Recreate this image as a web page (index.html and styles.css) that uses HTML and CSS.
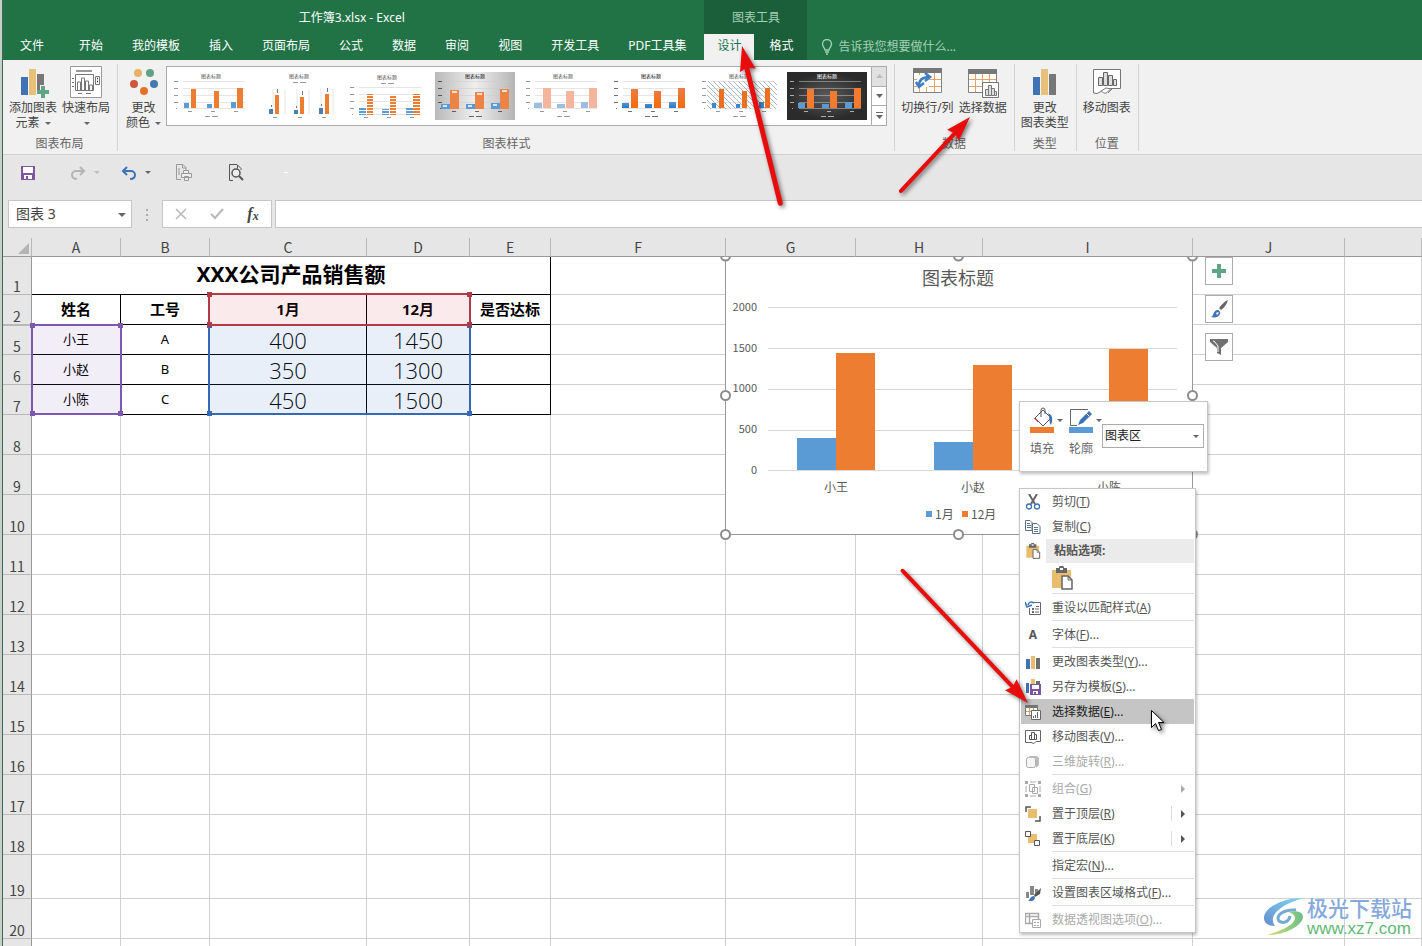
FILE: index.html
```html
<!DOCTYPE html>
<html lang="zh-CN">
<head>
  <meta charset="UTF-8">
  <meta name="viewport" content="width=device-width, initial-scale=1.0">
  <title>工作簿3.xlsx - Excel</title>
  <link rel="stylesheet" href="styles.css">
</head>
<body>
  <svg class="defs" width="0" height="0" aria-hidden="true">
    <defs>
      <linearGradient id="lightBg"><stop offset="0" stop-color="#b9b9b9"/><stop offset=".5" stop-color="#efefef"/><stop offset="1" stop-color="#b5b5b5"/></linearGradient>
      <radialGradient id="darkBg"><stop offset="0" stop-color="#5a5a5a"/><stop offset="1" stop-color="#2b2b2b"/></radialGradient>
      <linearGradient id="blueBar" x2="0" y2="1"><stop offset="0" stop-color="#5b9bd5"/><stop offset="1" stop-color="#2f75c0"/></linearGradient>
      <linearGradient id="orangeBar" x2="0" y2="1"><stop offset="0" stop-color="#ed7d45"/><stop offset="1" stop-color="#f26a08"/></linearGradient>
      <pattern id="blueStripe" width="4" height="3" patternUnits="userSpaceOnUse"><path d="M0 0h4v2H0z" fill="#5b9bd5"/></pattern>
      <pattern id="orangeStripe" width="4" height="3" patternUnits="userSpaceOnUse"><path d="M0 0h4v2H0z" fill="#ed7d31"/></pattern>
      <pattern id="hatch" width="5" height="5" patternUnits="userSpaceOnUse"><path d="M0 0l5 5" stroke="#8fa6b5" stroke-width=".8"/></pattern>
      <symbol id="plot" viewBox="0 0 80 48">
        <path class="lines" d="M12 9.500h62M12 16.500h62M12 23.500h62M12 30.500h62M12 36.500h62"/>
        <path class="ticks" d="M3 9.500h4M3 16.500h4M3 23.500h4M3 30.500h4M5 36.500h1"/>
        <text class="thumb-title" x="40" y="6">图表标题</text>
        <path class="names" d="M17 39.500h4M40 39.500h4M63 39.500h4M34 44.500h5M41 44.500h6"/>
      </symbol>
      <symbol id="plotTop" viewBox="0 0 80 48">
        <path class="lines" d="M14 17v26M26 17v26M38 17v26M50 17v26M62 17v26M74 17v26"/>
        <text class="thumb-title" x="40" y="6">图表标题</text>
        <path class="names" d="M34 10.500h5M41 10.500h6M14 45.500h4M39 45.500h4M63 45.500h4"/>
      </symbol>
      <symbol id="plotStripe" viewBox="0 0 80 48">
        <path class="lines" d="M12 15.500h62M12 22.500h62M12 29.500h62M12 36.500h62M12 42.500h62"/>
        <path class="ticks" d="M3 15.500h4M3 22.500h4M3 29.500h4M3 36.500h4M5 42.500h1"/>
        <text class="thumb-title" x="40" y="7">图表标题</text>
        <path class="names" d="M34 11.500h5M41 11.500h6M17 45.500h4M40 45.500h4M63 45.500h4"/>
      </symbol>
      <symbol id="bars" viewBox="0 0 16 16"><path fill="#3f73b5" d="M1 5h4v10H1z"/><path fill="#e9bd6f" d="M6 2h4v13H6z"/><path fill="#6d6d6d" d="M11 4h4v11h-4z"/></symbol>
      <symbol id="clip" viewBox="0 0 22 24">
        <path fill="#e9bd6f" d="M1 4h19v18H1z"/><path fill="#666" d="M5 2h3a2.500 2.500 0 0 1 5 0h3v5H5z"/><path fill="#fff" d="M9 2h3v2H9z"/>
        <path fill="#fff" stroke="#666" stroke-width="1.500" d="M11 10h6l4 4v9H11z"/><path fill="none" stroke="#666" d="M17 10v4h4"/>
      </symbol>
    </defs>
  </svg>

  <div class="app">
    <header class="header">
      <div class="header-main">
        <div class="title">工作簿3.xlsx - Excel</div>
        <nav class="tabs">
          <button class="tab file">文件</button>
          <button class="tab">开始</button>
          <button class="tab">我的模板</button>
          <button class="tab">插入</button>
          <button class="tab">页面布局</button>
          <button class="tab">公式</button>
          <button class="tab">数据</button>
          <button class="tab">审阅</button>
          <button class="tab">视图</button>
          <button class="tab">开发工具</button>
          <button class="tab">PDF工具集</button>
        </nav>
      </div>
      <div class="chart-tools">
        <div class="chart-tools-title">图表工具</div>
        <nav class="tabs">
          <button class="tab active">设计</button>
          <button class="tab">格式</button>
        </nav>
      </div>
      <button class="tell-me">
        <svg width="12" height="16" viewBox="0 0 12 16"><path d="M4 11C4 9 1.500 8 1.500 5a4.500 4.500 0 0 1 9 0C10.500 8 8 9 8 11zM4 13h4M5 15h2" fill="none" stroke="#a5d0b5" stroke-width="1.300"/></svg>
        告诉我您想要做什么...
      </button>
    </header>

    <div class="ribbon">
      <section class="group">
        <div class="tools">
          <button class="tool">
            <svg width="32" height="32"><path fill="#3f73b5" d="M4 11h7v18H4z"/><path fill="#e9c078" d="M12 3h7v26h-7z"/><path fill="#777" d="M20 8h7v11h-4v5h-3z"/><path fill="#5fa588" d="M24 20h4v4h4v4h-4v4h-4v-4h-4v-4h4z"/></svg>
            <span>添加图表<br>元素 <i class="caret"></i></span>
          </button>
          <button class="tool">
            <svg width="32" height="32"><path fill="#fff" stroke="#999" d="M.5.5h31v31H.5z"/><path fill="#999" d="M6 4h16v2H6z"/><path fill="none" stroke="#777" d="M5.500 8.500h18v16h-18zM2 12.500h2M2 16.500h2M2 20.500h2M8 27.500h4M16 27.500h5M7.500 24v-8h3v8M11.500 24V12h3v12M15.500 24v-9h3v9M19.500 24v-5h3v5M25.500 10.500h4v8h-4z"/><path stroke="#333" stroke-width="1.500" d="M27 12.500h1M27 15.500h1"/></svg>
            <span>快速布局<br><i class="caret"></i></span>
          </button>
        </div>
        <h2>图表布局</h2>
      </section>
      <section class="group styles-group">
        <div class="tools">
          <button class="tool">
            <svg width="32" height="32"><circle cx="10" cy="7" r="4" fill="#e4b365"/><circle cx="22" cy="7" r="4" fill="#62a086"/><circle cx="6" cy="18" r="4" fill="#cc553b"/><circle cx="26" cy="18" r="4" fill="#4677ae"/><circle cx="16" cy="25" r="4" fill="#e37228"/></svg>
            <span>更改<br>颜色 <i class="caret"></i></span>
          </button>
          <div class="gallery">
            <div class="thumbs">
              <svg class="thumb"><use href="#plot"/><path fill="#5b9bd5" d="M13 31h5v5h-5zM36 32h5v4h-5zM60 30h5v6h-5z"/><path fill="#ed7d31" d="M20 17h5v19h-5zM43 19h5v17h-5zM66 16h6v20h-6z"/></svg>
              <svg class="thumb"><use href="#plotTop"/><path fill="#4a81b5" d="M10 37h4v5h-4zM35 38h4v4h-4zM60 36h4v6h-4z"/><path fill="#ed7d31" d="M16 23h4v19h-4zM41 25h4v17h-4zM66 22h4v20h-4z"/><path stroke="#777" d="M12.500 33v2M37.500 34v2M62.500 32v2M18.500 17v4M43.500 19v4M68.500 16v4"/></svg>
              <svg class="thumb"><use href="#plotStripe"/><path fill="url(#blueStripe)" d="M12 36h7v7h-7zM35 37h7v6h-7zM59 36h7v7h-7z"/><path fill="url(#orangeStripe)" d="M20 22h6v21h-6zM43 24h6v19h-6zM66 22h7v21h-7z"/></svg>
              <svg class="thumb strong"><path fill="url(#lightBg)" d="M0 0h80v48H0z"/><use href="#plot"/><path fill="#5b9bd5" d="M6 32h9v5H6zM31 32h9v5h-9zM56 31h9v6h-9z"/><path fill="#ed8345" d="M15 18h9v19h-9zM40 20h9v17h-9zM65 17h9v20h-9z"/><path stroke="#fff" stroke-width="1.500" d="M17 20h5M42 22h5M67 19h5M8 34h4M33 34h4M58 33h4"/></svg>
              <svg class="thumb"><use href="#plot"/><path fill="#9dbde3" d="M11 31h8v5h-8zM34 32h8v4h-8zM58 30h7v6h-7z"/><path fill="#f5b49c" d="M20 16h8v20h-8zM43 19h8v17h-8zM66 16h8v20h-8z"/></svg>
              <svg class="thumb strong"><use href="#plot"/><path fill="url(#blueBar)" d="M11 31h7v5h-7zM34 32h7v4h-7zM58 30h7v6h-7z"/><path fill="url(#orangeBar)" d="M20 17h7v19h-7zM43 19h7v17h-7zM67 16h7v20h-7z"/></svg>
              <svg class="thumb"><path fill="url(#hatch)" d="M8 9h70v28H8z"/><use href="#plot"/><path fill="#3f86cc" d="M13 31h4v5h-4zM37 32h4v4h-4zM60 30h5v6h-5z"/><path fill="#ed7021" d="M20 17h5v19h-5zM43 19h5v17h-5zM66 16h5v20h-5z"/></svg>
              <svg class="thumb dark"><path fill="url(#darkBg)" d="M0 0h80v48H0z"/><use href="#plot"/><path fill="#5b9bd5" d="M11 31h7v5h-7zM35 32h7v4h-7zM58 30h7v6h-7z"/><path fill="#f37b31" d="M20 17h7v19h-7zM43 19h7v17h-7zM67 16h7v20h-7z"/></svg>
            </div>
            <div class="scroller">
              <button disabled aria-label="上一行"><svg width="7" height="4"><path d="M0 4l3.500-4L7 4z" fill="#bbb"/></svg></button>
              <button aria-label="下一行"><svg width="7" height="4"><path d="M0 0h7L3.500 4z" fill="#666"/></svg></button>
              <button aria-label="其他"><svg width="7" height="7"><path d="M0 0h7v1H0zM0 3h7L3.500 7z" fill="#666"/></svg></button>
            </div>
          </div>
        </div>
        <h2>图表样式</h2>
      </section>
      <section class="group">
        <div class="tools">
          <button class="tool">
            <svg width="32" height="32"><path fill="#fff" d="M2 3h28v24H2z"/><path fill="none" stroke="#e9a06a" d="M8.500 6v21M23.500 6v21M15.500 6v21M2 13.500h28M2 20.500h28"/><path fill="none" stroke="#808080" d="M2.500 2.500h28v24h-28z"/><path fill="#777" d="M2 2h29v5H2z"/><path fill="#fff" d="M6 9h12v12H6z"/><path d="M8 20c0-6 4-9 10-9M14 7l5 4-5 4M5 16l3 5 5-4" fill="none" stroke="#3f7fc1" stroke-width="2.500"/></svg>
            <span>切换行/列</span>
          </button>
          <button class="tool">
            <svg width="32" height="32"><path fill="#fff" d="M1 3h28v23H1z"/><path fill="none" stroke="#e9a06a" d="M8.500 8v18M15.500 8v18M22.500 8v18M1 13.500h28M1 20.500h28"/><path fill="none" stroke="#808080" d="M1.500 3.500h28v23h-28z"/><path fill="#777" d="M1 3h29v5H1z"/><path fill="#fff" stroke="#777" d="M15.500 16.500h16v15h-16z"/><path fill="#ddd" stroke="#777" d="M18.500 29.500v-6h3v6zM21.500 29.500v-10h3v10zM24.500 29.500v-7h3v7zM27.500 29.500v-4h2v4z"/></svg>
            <span>选择数据</span>
          </button>
        </div>
        <h2>数据</h2>
      </section>
      <section class="group">
        <div class="tools">
          <button class="tool">
            <svg width="32" height="32"><path fill="#3f73b5" d="M4 11h7v18H4z"/><path fill="#e9c078" d="M12 3h7v26h-7z"/><path fill="#777" d="M20 8h7v21h-7z"/></svg>
            <span>更改<br>图表类型</span>
          </button>
        </div>
        <h2>类型</h2>
      </section>
      <section class="group">
        <div class="tools">
          <button class="tool">
            <svg width="32" height="32"><path fill="#fff" stroke="#777" d="M2.500 3.500h27v19H20l-4 4c-3 2-4-1-6-1l-4 2-3.500-.5z"/><path fill="none" stroke="#777" d="M10 25l5-3 6 1-4 4"/><path fill="#ddd" stroke="#666" d="M7.500 19.500v-8h4v8zM12.500 19.500v-13h4v13zM17.500 19.500v-10h4v10zM22.500 19.500v-6h3v6z"/></svg>
            <span>移动图表</span>
          </button>
        </div>
        <h2>位置</h2>
      </section>
    </div>

    <div class="quick-bar">
      <button aria-label="保存"><svg width="16" height="16"><path fill="#8055a0" d="M1 1h14v14H1z"/><path fill="#fff" d="M3 2h10v6H3zM4 10h8v4H4z"/><path fill="#8055a0" d="M6 11h2v3H6z"/></svg></button>
      <button class="split" disabled aria-label="恢复"><svg width="16" height="16"><path d="M14 6H6a4 4 0 0 0-4 4c0 3 2 4 5 4M10 2l4 4-4 4" fill="none" stroke="#b5b5b5" stroke-width="2"/></svg><i class="caret"></i></button>
      <button class="split" aria-label="撤消"><svg width="16" height="16"><path d="M2 6h8a4 4 0 0 1 4 4c0 3-2 4-5 4M6 2L2 6l4 4" fill="none" stroke="#3f73b5" stroke-width="2"/></svg><i class="caret"></i></button>
      <button class="print" aria-label="快速打印"><svg width="17" height="17"><path d="M6 15.500H1.500V.5H8l3 3V6M7.500.5V4H11M4 4v7" fill="none" stroke="#999"/><path d="M8.500 9V6.500h5V9M6.500 9.500h10v4h-10zM9.500 12.500h4v4h-4z" fill="#eee" stroke="#999"/></svg></button>
      <button class="preview" aria-label="打印预览"><svg width="16" height="17"><path d="M5 16.500H1.500V.5H9l4 4V6M9.500 1v3.500" fill="none" stroke="#555"/><circle cx="8" cy="9" r="4" fill="#eee" stroke="#555" stroke-width="1.500"/><path d="M11 12l4 4" stroke="#555" stroke-width="2"/></svg></button>
      <span class="more"></span>
    </div>

    <div class="formula-bar">
      <div class="name-box">
        <input type="text" value="图表 3" aria-label="名称框">
        <button aria-label="名称列表"><i class="caret"></i></button>
      </div>
      <span class="grip"></span>
      <div class="formula-buttons">
        <button disabled aria-label="取消"><svg width="12" height="12"><path d="M1 1l10 10M11 1L1 11" stroke="#b8b8b8" stroke-width="1.500"/></svg></button>
        <button disabled aria-label="输入"><svg width="14" height="12"><path d="M1 6l4 4 8-9" fill="none" stroke="#b8b8b8" stroke-width="2"/></svg></button>
        <button class="fx" aria-label="插入函数">f<small>x</small></button>
      </div>
      <input class="formula" type="text" aria-label="编辑栏">
    </div>

    <main class="sheet">
      <table class="grid">
        <colgroup>
          <col class="col-num"><col class="col-a"><col class="col-b"><col class="col-c"><col class="col-d"><col class="col-e"><col class="col-f"><col class="col-g"><col class="col-h"><col class="col-i"><col class="col-j"><col>
        </colgroup>
        <thead>
          <tr><th><svg class="corner" width="11" height="11"><path d="M11 0v11H0z" fill="#b4b4b4"/></svg></th><th>A</th><th>B</th><th>C</th><th>D</th><th>E</th><th>F</th><th>G</th><th>H</th><th>I</th><th>J</th><th></th></tr>
        </thead>
        <tbody>
          <tr class="row-title"><th>1</th><td class="cell" colspan="5">XXX公司产品销售额</td><td></td><td></td><td></td><td></td><td></td><td></td></tr>
          <tr class="row-data row-names"><th>2</th><td class="cell">姓名</td><td class="cell">工号</td><td class="cell">1月</td><td class="cell">12月</td><td class="cell">是否达标</td><td></td><td></td><td></td><td></td><td></td><td></td></tr>
          <tr class="row-data after-hidden"><th>5</th><td class="cell">小王</td><td class="cell">A</td><td class="cell num">400</td><td class="cell num">1450</td><td class="cell"></td><td></td><td></td><td></td><td></td><td></td><td></td></tr>
          <tr class="row-data"><th>6</th><td class="cell">小赵</td><td class="cell">B</td><td class="cell num">350</td><td class="cell num">1300</td><td class="cell"></td><td></td><td></td><td></td><td></td><td></td><td></td></tr>
          <tr class="row-data"><th>7</th><td class="cell">小陈</td><td class="cell">C</td><td class="cell num">450</td><td class="cell num">1500</td><td class="cell"></td><td></td><td></td><td></td><td></td><td></td><td></td></tr>
          <tr><th>8</th><td></td><td></td><td></td><td></td><td></td><td></td><td></td><td></td><td></td><td></td><td></td></tr>
          <tr><th>9</th><td></td><td></td><td></td><td></td><td></td><td></td><td></td><td></td><td></td><td></td><td></td></tr>
          <tr><th>10</th><td></td><td></td><td></td><td></td><td></td><td></td><td></td><td></td><td></td><td></td><td></td></tr>
          <tr><th>11</th><td></td><td></td><td></td><td></td><td></td><td></td><td></td><td></td><td></td><td></td><td></td></tr>
          <tr><th>12</th><td></td><td></td><td></td><td></td><td></td><td></td><td></td><td></td><td></td><td></td><td></td></tr>
          <tr><th>13</th><td></td><td></td><td></td><td></td><td></td><td></td><td></td><td></td><td></td><td></td><td></td></tr>
          <tr><th>14</th><td></td><td></td><td></td><td></td><td></td><td></td><td></td><td></td><td></td><td></td><td></td></tr>
          <tr><th>15</th><td></td><td></td><td></td><td></td><td></td><td></td><td></td><td></td><td></td><td></td><td></td></tr>
          <tr><th>16</th><td></td><td></td><td></td><td></td><td></td><td></td><td></td><td></td><td></td><td></td><td></td></tr>
          <tr><th>17</th><td></td><td></td><td></td><td></td><td></td><td></td><td></td><td></td><td></td><td></td><td></td></tr>
          <tr><th>18</th><td></td><td></td><td></td><td></td><td></td><td></td><td></td><td></td><td></td><td></td><td></td></tr>
          <tr class="row-tall"><th>19</th><td></td><td></td><td></td><td></td><td></td><td></td><td></td><td></td><td></td><td></td><td></td></tr>
          <tr><th>20</th><td></td><td></td><td></td><td></td><td></td><td></td><td></td><td></td><td></td><td></td><td></td></tr>
          <tr><th></th><td></td><td></td><td></td><td></td><td></td><td></td><td></td><td></td><td></td><td></td><td></td></tr>
        </tbody>
      </table>

      <div class="range range-values"><i></i><i></i><i></i><i></i></div>
      <div class="range range-names"><i></i><i></i><i></i><i></i></div>
      <div class="range range-series"><i></i><i></i><i></i><i></i></div>

      <svg class="chart" width="480" height="284" viewBox="0 0 480 284">
        <path class="chart-area" d="M6.500-1v278.500h467V-1z"/>
        <text class="chart-title" x="239" y="28">图表标题</text>
        <path class="gridlines" d="M49 50.500h409M49 91.500h409M49 132.500h409M49 173.500h409M49 213.500h409"/>
        <g class="axis-y"><text x="38" y="54">2000</text><text x="38" y="95">1500</text><text x="38" y="135">1000</text><text x="38" y="176">500</text><text x="38" y="217">0</text></g>
        <path class="series-1" d="M78 181h39v32H78zM215 185h39v28h-39zM351 177h39v36h-39z"/>
        <path class="series-2" d="M117 96h39v117h-39zM254 108h39v105h-39zM390 92h39v121h-39z"/>
        <g class="axis-x"><text x="117" y="235">小王</text><text x="254" y="235">小赵</text><text x="390" y="235">小陈</text></g>
        <path class="series-1" d="M207 254h6v6h-6z"/><text class="legend" x="216" y="262">1月</text>
        <path class="series-2" d="M243 254h6v6h-6z"/><text class="legend" x="252" y="262">12月</text>
        <g class="handles"><circle cx="6.500" cy="-1" r="4.500"/><circle cx="239.500" cy="-1" r="4.500"/><circle cx="473.500" cy="-1" r="4.500"/><circle cx="6.500" cy="138.500" r="4.500"/><circle cx="473.500" cy="138.500" r="4.500"/><circle cx="6.500" cy="277.500" r="4.500"/><circle cx="239.500" cy="277.500" r="4.500"/><circle cx="473.500" cy="277.500" r="4.500"/></g>
      </svg>

      <div class="chart-buttons">
        <button aria-label="图表元素"><svg width="20" height="20"><path fill="#5fa588" d="M8 3h4v5h5v4h-5v5H8v-5H3V8h5z"/></svg></button>
        <button aria-label="图表样式"><svg width="20" height="20"><path d="M10 9c3-4 6-7 9-8-1 4-4 8-7 10z" fill="#666"/><path d="M9 10l3 3" stroke="#fff"/><path d="M2 18c3-1 2-6 6-7 2 0 4 2 3 4-1 3-5 4-9 3z" fill="#3f73b5"/><path d="M7 14l2-1 1 1-2 2z" fill="#fff"/></svg></button>
        <button aria-label="图表筛选器"><svg width="20" height="20"><path d="M1 2h18v3l-7 6v7l-4-2v-5L1 5z" fill="#707070"/><path d="M4 4h1l4 5v6" fill="none" stroke="#fff"/></svg></button>
      </div>

      <div class="mini-bar">
        <button>
          <svg width="24" height="26"><path d="M5 11l8-8 8 8-8 8z" fill="#fff" stroke="#555"/><path d="M11 10V3a2 2 0 0 1 4 0v4" fill="none" stroke="#555"/><path d="M4 11l4 4" stroke="#c55"/><path d="M18 6c5 2 5 7 3 12-2-2-1-7-3-12z" fill="#3f73b5"/><path d="M0 20h24v6H0z" fill="#ed7d31"/></svg>
          <i class="caret"></i><span>填充</span>
        </button>
        <button>
          <svg width="24" height="26"><path d="M19 2.500H1.500v16H8" fill="none" stroke="#666"/><path d="M9 18l2-5L20 4l3 3-9 9z" fill="#3f73b5"/><path d="M17 6l3 3" stroke="#fff"/><path d="M0 20h24v6H0z" fill="#5b9bd5"/></svg>
          <i class="caret"></i><span>轮廓</span>
        </button>
        <div class="select-wrap">
          <select aria-label="图表元素"><option>图表区</option></select>
          <i class="caret"></i>
        </div>
      </div>

      <div class="menu" role="menu">
        <button role="menuitem"><svg class="icon"><path d="M4 0l6 10M12 0L6 10" stroke="#666" stroke-width="2"/><circle cx="4" cy="12.500" r="2.500" fill="none" stroke="#3f73b5" stroke-width="1.300"/><circle cx="12" cy="12.500" r="2.500" fill="none" stroke="#3f73b5" stroke-width="1.300"/></svg>剪切(<u>T</u>)</button>
        <button role="menuitem"><svg class="icon"><path d="M.5 1.500H5l2 2v8H.5zM2 4.500h3M2 6.500h4M2 8.500h4" fill="#fff" stroke="#5d7186"/><path d="M7.500 4.500H12l3 3v7H7.500zM9 8.500h4M9 10.500h4M9 12.500h4" fill="#fff" stroke="#5d7186"/></svg>复制(<u>C</u>)</button>
        <div class="menu-head"><svg class="icon"><use href="#clip"/></svg><span>粘贴选项:</span></div>
        <button class="paste" role="menuitem" aria-label="粘贴"><svg width="22" height="24"><use href="#clip"/></svg></button>
        <hr>
        <button role="menuitem"><svg class="icon"><path d="M8 2.500h7.500v12h-11V8" fill="#fff" stroke="#666"/><path d="M7 8h2v2H7zM7 11h2v2H7zM11 6h3v1h-3zM10 8.500h4v1h-4zM10 11.500h4v1h-4z" fill="#666"/><path d="M9 3C6 1 4 2 3 5M0 2l2 5 5-2" fill="none" stroke="#3f73b5" stroke-width="1.600"/></svg>重设以匹配样式(<u>A</u>)</button>
        <hr>
        <button role="menuitem"><b class="icon letter">A</b>字体(<u>F</u>)...</button>
        <hr>
        <button role="menuitem"><svg class="icon"><use href="#bars"/></svg>更改图表类型(<u>Y</u>)...</button>
        <button role="menuitem"><svg class="icon"><path fill="#3f73b5" d="M1 4h3v10H1z"/><path fill="#e9bd6f" d="M6 0h4v5H6z"/><path fill="#6d6d6d" d="M11 2h4v3h-4z"/><path fill="#8055a0" d="M5 5h11v11H5z"/><path fill="#fff" d="M7 6h7v4H7zM8 12h5v3H8z"/><path fill="#8055a0" d="M9 13h2v2H9z"/></svg>另存为模板(<u>S</u>)...</button>
        <button class="hover" role="menuitem"><svg class="icon"><path fill="#fff" stroke="#777" d="M.5 1.500h12v10H.5z"/><path stroke="#d99a63" d="M4.500 4v7M8.500 4v7M1 7.500h11"/><path fill="#777" d="M0 1h13v3H0z"/><path fill="#fff" stroke="#666" d="M6.500 6.500h9v9h-9z"/><path stroke="#666" d="M8.500 14v-2M10.500 14v-3M12.500 14V8"/></svg>选择数据(<u>E</u>)...</button>
        <button role="menuitem"><svg class="icon"><path d="M.5 1.500h15v11H11l-2 2-3-1H.5z" fill="#fff" stroke="#666"/><path d="M4.500 10.500v-4h2v4zM6.500 10.500v-7h3v7zM9.500 10.500v-5h2v5z" fill="none" stroke="#555"/></svg>移动图表(<u>V</u>)...</button>
        <button role="menuitem" disabled><svg class="icon"><rect x="1.500" y="3.500" width="9" height="10" rx="2" fill="#f5f5f5" stroke="#aaa"/><path d="M2 4l3-2h7l2 2v7l-3 3V4z" fill="#bbb"/></svg>三维旋转(<u>R</u>)...</button>
        <hr>
        <button role="menuitem" disabled><svg class="icon"><path d="M0 0h3v3H0zM13 0h3v3h-3zM0 13h3v3H0zM13 13h3v3h-3z" fill="#aaa"/><path d="M4.500 3.500h5v7h-5zM7.500 6.500h5v6h-5zM5 1h6M5 15h6M1 5v6M15 5v6" fill="none" stroke="#aaa"/></svg>组合(<u>G</u>)<i class="arrow"></i></button>
        <button class="has-line" role="menuitem"><svg class="icon"><path d="M6 1H1v5M15 10v5h-5" fill="none" stroke="#555" stroke-width="1.500"/><path d="M3 3h9v9H3z" fill="#e9bd6f"/></svg>置于顶层(<u>R</u>)<i class="arrow"></i></button>
        <button class="has-line" role="menuitem"><svg class="icon"><path d="M3 3h9v9H3z" fill="#e9bd6f"/><path d="M.5.5h5v5h-5zM9.500 9.500h5v5h-5z" fill="#fff" stroke="#555"/></svg>置于底层(<u>K</u>)<i class="arrow"></i></button>
        <hr>
        <button role="menuitem"><span class="icon"></span>指定宏(<u>N</u>)...</button>
        <hr>
        <button role="menuitem"><svg class="icon"><path d="M1 7h3v6H1zM5 1h4v9H5zM10 4h3v5h-3z" fill="#888"/><path d="M16 3l-1 6-5 3-1-2z" fill="#555"/><path d="M3 16c2-1 2-5 6-5 3 3-2 6-6 5z" fill="#3f73b5"/></svg>设置图表区域格式(<u>F</u>)...</button>
        <hr>
        <button role="menuitem" disabled><svg class="icon"><path d="M.5 1.500h13v10H.5zM1 4.500h12M4.500 2v9" fill="none" stroke="#aaa" stroke-width="1.500"/><path d="M7.500 7.500h8v8h-8zM9 10.500h2M12 10.500h2M9 13.500h2M12 13.500h2" fill="#fff" stroke="#aaa"/></svg>数据透视图选项(<u>O</u>)...</button>
      </div>
    </main>

    <a class="site-mark" href="http://www.xz7.com">
      <svg width="42" height="40" viewBox="0 0 42 40">
        <defs><linearGradient id="wave" x1="0" y1="1" x2="1" y2="0"><stop offset="0" stop-color="#668fd1"/><stop offset="1" stop-color="#82d5f2"/></linearGradient><linearGradient id="leaf" x1="0" x2="1"><stop offset="0" stop-color="#dce27a"/><stop offset="1" stop-color="#6abf88"/></linearGradient></defs>
        <path fill="url(#wave)" d="M41 1C22 0 1 10 1 21c0 5 4 8 11 8C5 20 15 8 41 1z"/>
        <path fill="none" stroke="#74a9d4" stroke-width="3" d="M33 13c-13-1-21 6-17 11 4 3 10 1 11-5"/>
        <path fill="url(#leaf)" d="M26 15c8-2 14 0 14 5C39 30 18 39 4 38c13-4 26-9 28-16 0-4-2-5-6-7z"/>
      </svg>
      <span><strong>极光下载站</strong><em>www.xz7.com</em></span>
    </a>

    <svg class="pointers" aria-hidden="true">
      <path d="M0 0l8 25-6-2 1 139c0 3-5 3-5 0l-1-139-5 2z" transform="translate(742 46) rotate(-13.500)"/>
      <path d="M0 0l8 25-6-2v78c0 3-4 3-4 0V23l-6 2z" transform="translate(970 117) rotate(43)"/>
      <path d="M0 0l8 25-6-2v159c0 3-4 3-4 0V23l-6 2z" transform="translate(1028 703) rotate(136.500)"/>
      <path class="cursor" d="M1151.500 710.500v17l4-4 3 7 3-1-3-7h5.500z"/>
    </svg>
  </div>
</body>
</html>
```

FILE: styles.css
```css
* {
  box-sizing: border-box;
}
body {
  margin: 0;
  padding-left: 2px;
  background: #c5d0ca;
  font-family: "Noto Sans", "Noto Sans CJK SC", sans-serif;
  font-size: 12px;
  line-height: 16px;
  color: #444;
}
button, input, select {
  font: inherit;
  color: inherit;
  background: none;
  border: 0;
  padding: 0;
  margin: 0;
}
h2 {
  margin: 0;
  font-size: 12px;
  line-height: 14px;
  font-weight: normal;
  text-align: center;
  color: #666;
}
svg {
  display: block;
  flex: none;
}
.defs {
  position: absolute;
}
.app {
  position: relative;
  display: flex;
  flex-direction: column;
  height: 100vh;
  overflow: hidden;
  background: #e6e6e6;
  border-left: 1px solid #3a6b50;
}
.caret {
  display: inline-block;
  border: 3px solid transparent;
  border-top-color: #666;
  border-bottom: 0;
  vertical-align: middle;
}

/* header */
.header {
  display: flex;
  height: 60px;
  background: #217346;
  color: #fff;
}
.header-main {
  padding-right: 4px;
}
.title, .chart-tools-title {
  height: 34px;
  line-height: 36px;
  text-align: center;
}
.chart-tools {
  background: #1b5e3a;
}
.chart-tools-title {
  color: #a5d0b5;
}
.tabs {
  display: flex;
  gap: 1px;
}
.tab {
  height: 26px;
  padding: 0 14px 2px;
  white-space: nowrap;
}
.tab.file {
  padding: 0 20px 2px 17px;
}
.chart-tools .tab {
  padding: 0 14px 2px;
}
.tab.active {
  padding: 0 13px 2px;
  background: #f1f1f1;
  color: #217346;
}
.tell-me {
  display: flex;
  align-items: center;
  align-self: flex-end;
  gap: 5px;
  height: 26px;
  padding-left: 14px;
  color: #a5d0b5;
}

/* ribbon */
.ribbon {
  display: flex;
  height: 95px;
  padding: 4px 0 3px;
  background: #f1f1f1;
  border-bottom: 1px solid #d2d2d2;
}
.group {
  display: flex;
  flex-direction: column;
  justify-content: space-between;
  padding: 2px 7px 0 6px;
  border-right: 1px solid #d2d2d2;
}
.styles-group {
  padding: 2px 7px 0 8px;
}
.tools {
  display: flex;
  gap: 5px;
}
.tool {
  display: flex;
  flex-direction: column;
  align-items: center;
  gap: 2px;
  line-height: 15px;
  white-space: nowrap;
}
.tool .caret {
  margin-left: 2px;
}
.gallery {
  display: flex;
  height: 60px;
  background: #fff;
  border: 1px solid #ababab;
}
.thumbs {
  display: flex;
  gap: 8px;
  padding: 5px 4px;
}
.thumb {
  width: 80px;
  height: 48px;
  color: #555;
}
.thumb-title {
  fill: currentColor;
  font-size: 5px;
  text-anchor: middle;
}
.strong {
  color: #111;
}
.dark {
  color: #fff;
}
.lines {
  stroke: #ccc;
  stroke-opacity: .5;
}
.ticks, .names {
  stroke: currentColor;
  stroke-opacity: .6;
  fill: none;
}
.scroller {
  display: flex;
  flex-direction: column;
  width: 15px;
  border-left: 1px solid #ababab;
}
.scroller button {
  display: flex;
  flex: 1;
  align-items: center;
  justify-content: center;
}
.scroller button + button {
  border-top: 1px solid #ababab;
}
.scroller button:disabled {
  background: #e1e1e1;
}

/* quick access */
.quick-bar {
  display: flex;
  align-items: center;
  height: 45px;
  padding: 0 17px 10px;
}
.quick-bar .split {
  display: flex;
  align-items: center;
  gap: 8px;
  margin-left: 34px;
}
.quick-bar .split + .split {
  margin-left: 21px;
}
.quick-bar .split:disabled .caret {
  opacity: .3;
}
.quick-bar .print {
  margin-left: 24px;
}
.quick-bar .preview {
  margin-left: 36px;
}
.more {
  width: 4px;
  height: 1px;
  margin-left: 40px;
  background: #fff;
}

/* formula bar */
.formula-bar {
  display: flex;
  height: 38px;
  padding: 0 0 10px 5px;
}
.name-box, .formula-buttons, .formula {
  background: #fff;
  border: 1px solid #c6c6c6;
}
.name-box {
  display: flex;
  width: 124px;
}
.name-box input {
  flex: 1;
  min-width: 0;
  padding-left: 7px;
  font-size: 14px;
}
.name-box button {
  width: 18px;
}
.name-box .caret {
  border-width: 4px 4px 0;
}
.grip {
  width: 2px;
  height: 12px;
  margin: 9px 14px 0;
  background: repeating-linear-gradient(#aaa 0 2px, transparent 2px 5px);
}
.formula-buttons {
  display: flex;
  width: 110px;
  margin-right: 3px;
}
.formula-buttons button {
  display: flex;
  flex: 1;
  align-items: center;
  justify-content: center;
}
.formula-buttons .fx {
  font: italic bold 16px "Liberation Serif", serif;
}
.fx small {
  font-size: 12px;
  padding-top: 4px;
}
.formula {
  flex: 1;
  border-right: 0;
}

/* sheet */
.sheet {
  position: relative;
  flex: 1;
  overflow: hidden;
  background: #fff;
}
.grid {
  width: 100%;
  table-layout: fixed;
  border-collapse: separate;
  border-spacing: 0;
  text-align: center;
}
.col-num { width: 29px; }
.col-a, .col-b { width: 89px; }
.col-c { width: 157px; }
.col-d { width: 103px; }
.col-e { width: 81px; }
.col-f { width: 175px; }
.col-g { width: 130px; }
.col-h { width: 127px; }
.col-i { width: 210px; }
.col-j { width: 152px; }
.grid th, .grid td {
  padding: 0;
  border: 0 solid #d0d0d0;
  border-width: 0 1px 1px 0;
}
.grid th {
  background: #e6e6e6;
  border-color: #b8b8b8;
  font-size: 14px;
  font-weight: normal;
  font-family: "Noto Sans CJK SC", sans-serif;
}
.grid thead th {
  height: 19px;
  padding-top: 1px;
  line-height: 17px;
  border-bottom-color: #999;
}
.corner {
  margin: 2px 0 0 15px;
}
.grid tbody tr {
  height: 40px;
}
.grid tbody th {
  vertical-align: bottom;
  line-height: 16px;
  border-right-color: #999;
}
.grid .row-title {
  height: 38px;
}
.grid .row-data {
  height: 30px;
}
.grid .row-tall {
  height: 44px;
}
.grid .after-hidden th {
  border-top: 1px solid #b8b8b8;
}
.grid .cell {
  padding-bottom: 2px;
  border-color: #000;
  color: #000;
  font-size: 13px;
}
.grid .row-title .cell {
  padding-bottom: 4px;
  font-size: 21px;
  line-height: 30px;
  font-weight: bold;
}
.grid .row-names .cell {
  font-size: 15px;
  font-weight: bold;
}
.grid .num {
  padding-bottom: 0;
  font-family: "Open Sans", sans-serif;
  font-size: 22px;
  font-weight: 300;
  line-height: 28px;
}

/* highlighted source ranges */
.range {
  position: absolute;
  border: 2px solid;
}
.range i {
  position: absolute;
  width: 5px;
  height: 5px;
  background: currentColor;
}
.range i:nth-child(1) { left: -3px; top: -3px; }
.range i:nth-child(2) { right: -3px; top: -3px; }
.range i:nth-child(3) { left: -3px; bottom: -3px; }
.range i:nth-child(4) { right: -3px; bottom: -3px; }
.range-series {
  left: 205px;
  top: 55px;
  width: 263px;
  height: 33px;
  color: #b23a48;
  background: rgba(220, 50, 60, .1);
}
.range-names {
  left: 28px;
  top: 86px;
  width: 91px;
  height: 91px;
  color: #7e57b0;
  background: rgba(126, 87, 176, .1);
}
.range-values {
  left: 205px;
  top: 86px;
  width: 263px;
  height: 91px;
  color: #3568b5;
  background: rgba(50, 110, 200, .11);
}

/* chart */
.chart {
  position: absolute;
  left: 716px;
  top: 19px;
  font-family: "Noto Sans CJK SC", sans-serif;
  font-size: 11px;
}
.chart text {
  fill: #595959;
}
.chart-area {
  fill: #fff;
  stroke: #999;
}
.chart .chart-title {
  font-size: 18px;
  text-anchor: middle;
}
.gridlines {
  stroke: #d9d9d9;
}
.series-1 {
  fill: #5b9bd5;
}
.series-2 {
  fill: #ed7d31;
}
.axis-y {
  text-anchor: end;
}
.axis-x {
  font-size: 12px;
  text-anchor: middle;
}
.legend {
  font-size: 12px;
}
.handles {
  fill: #fff;
  stroke: #8c8c8c;
  stroke-width: 2;
}
.chart-buttons {
  position: absolute;
  left: 1202px;
  top: 19px;
  display: flex;
  flex-direction: column;
  gap: 10px;
}
.chart-buttons button {
  display: flex;
  align-items: center;
  justify-content: center;
  width: 28px;
  height: 28px;
  background: #fff;
  border: 1px solid #ababab;
}

/* popups */
.mini-bar, .menu {
  position: absolute;
  background: #fff;
  border: 1px solid #c6c6c6;
  box-shadow: 1px 2px 3px rgba(0, 0, 0, .25);
}
.mini-bar {
  left: 1016px;
  top: 163px;
  display: flex;
  width: 189px;
  height: 71px;
  padding: 5px 3px 0 10px;
  color: #666;
}
.mini-bar button {
  display: grid;
  grid-template-columns: 24px 6px;
  gap: 8px 3px;
  align-content: start;
  align-items: center;
  white-space: nowrap;
}
.mini-bar button:first-child {
  margin-right: 6px;
}
.select-wrap {
  display: flex;
  align-items: center;
  align-self: flex-start;
  flex: 1;
  height: 24px;
  margin-top: 17px;
  padding-right: 4px;
  border: 1px solid #ababab;
}
.select-wrap select {
  flex: 1;
  appearance: none;
  padding-left: 2px;
  color: #222;
}
.menu {
  left: 1016px;
  top: 250px;
  width: 177px;
  padding: 0 1px;
  color: #555;
}
.menu button {
  display: flex;
  align-items: center;
  width: 100%;
  height: 25px;
  padding-left: 4px;
  text-align: left;
}
.menu button:disabled {
  color: #aaa;
}
.menu .hover {
  background: #c5c5c5;
  color: #222;
}
.menu .has-line {
  background: linear-gradient(#ddd, #ddd) no-repeat right 22px center / 1px 15px;
}
.icon {
  width: 16px;
  height: 16px;
  margin-right: 11px;
}
.letter {
  text-align: center;
}
.menu-head {
  display: flex;
  align-items: center;
  height: 24px;
  padding-left: 4px;
  font-weight: bold;
}
.menu-head .icon {
  margin-right: 5px;
}
.menu-head span {
  flex: 1;
  padding-left: 8px;
  line-height: 24px;
  background: #ebebeb;
}
.menu .paste {
  height: 30px;
  padding-left: 30px;
}
.menu hr {
  height: 1px;
  margin: 0 0 1px 31px;
  border: 0;
  background: #ddd;
}
.arrow {
  margin: 0 9px 0 auto;
  border: 4px solid transparent;
  border-left-color: currentColor;
  border-right: 0;
}

/* site mark */
.site-mark {
  position: absolute;
  right: 10px;
  bottom: 7px;
  display: flex;
  gap: 2px;
  text-decoration: none;
}
.site-mark span {
  display: flex;
  flex-direction: column;
}
.site-mark strong {
  font-size: 21px;
  line-height: 22px;
  font-weight: 500;
  color: #86a9dc;
}
.site-mark em {
  font: normal 17px/20px "Liberation Sans", sans-serif;
  color: #5fb878;
}

/* arrows and mouse cursor */
.pointers {
  position: absolute;
  left: -3px;
  top: 0;
  width: 100vw;
  height: 100vh;
  pointer-events: none;
  fill: #e80c0c;
  filter: drop-shadow(2px 2px 2px rgba(0, 0, 0, .5));
}
.cursor {
  fill: #fff;
  stroke: #000;
}
```
